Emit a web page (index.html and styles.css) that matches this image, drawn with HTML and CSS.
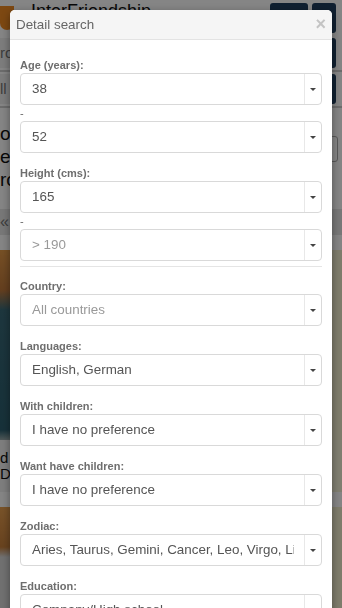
FILE: index.html
```html
<!DOCTYPE html>
<html lang="en">
<head>
<meta charset="utf-8">
<title>Detail search</title>
<link rel="stylesheet" href="styles.css">
</head>
<body>
<div class="page">
  <header class="topbar">
    <span class="logo"></span>
    <span class="brand">InterFriendship</span>
    <span class="spacer"></span>
    <span class="nav-btn wide"></span>
    <span class="nav-btn"></span>
  </header>
  <div class="search-row">
    <div class="input">rom</div>
    <span class="nav-btn"></span>
  </div>
  <div class="search-row">
    <div class="input">ll</div>
    <span class="nav-btn"></span>
  </div>
  <div class="intro">
    <p>o find new friends</p>
    <p>e. People from all</p>
    <p>rcountries</p>
    <span class="mini-btn"></span>
  </div>
  <div class="pager">«</div>
  <div class="card">
    <div class="photo"></div>
    <div class="card-text"><p>d</p><p>D</p></div>
  </div>
  <div class="card">
    <div class="photo second"></div>
  </div>
</div>
<div class="backdrop"></div>

<div class="modal">
  <div class="modal-header">
    <h4 class="modal-title">Detail search</h4>
    <span class="close">×</span>
  </div>
  <div class="modal-body">
    <div class="field">
      <label>Age (years):</label>
      <div class="select"><span class="value">38</span><span class="toggle"><i class="caret"></i></span></div>
      <div class="dash">-</div>
      <div class="select"><span class="value">52</span><span class="toggle"><i class="caret"></i></span></div>
    </div>
    <div class="field tight">
      <label>Height (cms):</label>
      <div class="select"><span class="value">165</span><span class="toggle"><i class="caret"></i></span></div>
      <div class="dash">-</div>
      <div class="select"><span class="value placeholder">&gt; 190</span><span class="toggle"><i class="caret"></i></span></div>
    </div>
    <hr class="divider">
    <div class="field">
      <label>Country:</label>
      <div class="select"><span class="value placeholder">All countries</span><span class="toggle"><i class="caret"></i></span></div>
    </div>
    <div class="field">
      <label>Languages:</label>
      <div class="select"><span class="value">English, German</span><span class="toggle"><i class="caret"></i></span></div>
    </div>
    <div class="field">
      <label>With children:</label>
      <div class="select"><span class="value">I have no preference</span><span class="toggle"><i class="caret"></i></span></div>
    </div>
    <div class="field">
      <label>Want have children:</label>
      <div class="select"><span class="value">I have no preference</span><span class="toggle"><i class="caret"></i></span></div>
    </div>
    <div class="field">
      <label>Zodiac:</label>
      <div class="select"><span class="value">Aries, Taurus, Gemini, Cancer, Leo, Virgo, Libra, Scorpio</span><span class="toggle"><i class="caret"></i></span></div>
    </div>
    <div class="field">
      <label>Education:</label>
      <div class="select"><span class="value">Company/High school</span><span class="toggle"><i class="caret"></i></span></div>
    </div>
  </div>
</div>
</body>
</html>
```
FILE: styles.css
```css
html, body {
  margin: 0;
  padding: 0;
  width: 342px;
  height: 608px;
  overflow: hidden;
}
body {
  position: relative;
  font-family: "Liberation Sans", Arial, sans-serif;
  background: #f6f3d8;
}

/* background page */
.page {
  display: flex;
  flex-direction: column;
  width: 342px;
  background: #fff;
}
.topbar {
  display: flex;
  align-items: center;
  height: 36px;
  gap: 4px;
  padding-right: 6px;
  background: #fff;
}
.logo {
  width: 14px;
  height: 24px;
  background: #f08a24;
  border-radius: 0 0 8px 8px;
}
.brand {
  margin-left: 13px;
  font-size: 18px;
  color: #111;
  align-self: flex-start;
  margin-top: 1px;
}
.spacer { flex: 1; }
.nav-btn {
  width: 24px;
  height: 30px;
  background: #1f3f5f;
  border-radius: 3px;
}
.nav-btn.wide { width: 38px; }
.search-row {
  display: flex;
  align-items: center;
  gap: 4px;
  height: 34px;
  padding-right: 6px;
  border-bottom: 2px solid #d0d0d0;
}
.search-row .input {
  flex: 1;
  height: 30px;
  background: #f0f0f0;
  color: #777;
  font-size: 15px;
  line-height: 30px;
}
.intro {
  position: relative;
  padding: 14px 0 10px;
  font-size: 19px;
  color: #111;
}
.intro p { margin: 0; line-height: 23px; }
.mini-btn {
  position: absolute;
  right: 4px;
  top: 28px;
  width: 10px;
  height: 24px;
  border: 1px solid #aaa;
  border-radius: 3px;
}
.pager {
  margin-top: 8px;
  height: 26px;
  background: #e6e6e6;
  color: #777;
  font-size: 16px;
  line-height: 26px;
}
.card {
  margin-top: 15px;
  background: #f6f3d8;
}
.photo {
  height: 190px;
  background:
    linear-gradient(to right, transparent 0 30px, #f3efd0 30px),
    linear-gradient(to bottom, #e49a48 0, #c0793c 40px, #3a6a78 60px, #2c5f6f 180px, #9aa 190px);
}
.photo.second {
  height: 110px;
  background:
    linear-gradient(to right, transparent 0 30px, #f3efd0 30px),
    linear-gradient(to bottom, #e8a050 0, #c8803c 40px, #d8d8d8 50px);
}
.card-text {
  padding: 10px 0;
  background: linear-gradient(to right, #f2f2f2 0 30px, #f6f3d8 30px);
  font-size: 15px;
  color: #111;
}
.card-text p { margin: 0; line-height: 16px; }

.backdrop {
  position: fixed;
  inset: 0;
  background: rgba(0, 0, 0, 0.48);
}

/* modal */
.modal {
  position: absolute;
  top: 10px;
  left: 10px;
  width: 322px;
  height: 620px;
  background: #fff;
  border-radius: 5px 5px 0 0;
  box-shadow: 0 3px 9px rgba(0, 0, 0, 0.4);
  overflow: hidden;
}
.modal-header {
  display: flex;
  align-items: center;
  justify-content: space-between;
  height: 29px;
  padding: 0 6px;
  background: #f5f5f5;
  border-bottom: 1px solid #e3e3e3;
}
.modal-title {
  margin: 0;
  font-size: 13.4px;
  font-weight: normal;
  color: #666;
}
.close {
  font-size: 18px;
  font-weight: bold;
  color: #c4c4c4;
  line-height: 18px;
  margin-top: -2px;
}
.modal-body {
  padding: 18px 10px 0;
}
.field {
  margin-bottom: 13px;
}
.field.tight {
  margin-bottom: 5px;
}
.field label {
  display: block;
  font-size: 11px;
  font-weight: bold;
  color: #6e6e6e;
  line-height: 15px;
}
.select {
  display: flex;
  height: 32px;
  box-sizing: border-box;
  border: 1px solid #d9d9d9;
  border-radius: 4px;
}
.value {
  flex: 1;
  min-width: 0;
  margin: 0 10px 0 11px;
  font-size: 13.4px;
  line-height: 30px;
  color: #555;
  white-space: nowrap;
  overflow: hidden;
}
.value.placeholder {
  color: #999;
}
.toggle {
  width: 16px;
  display: flex;
  align-items: center;
  justify-content: center;
  border-left: 1px solid #e8e8e8;
}
.caret {
  width: 0;
  height: 0;
  border-top: 3px solid #444;
  border-left: 3px solid transparent;
  border-right: 3px solid transparent;
}
.dash {
  font-size: 11px;
  line-height: 16px;
  color: #666;
}
.divider {
  border: 0;
  border-top: 1px solid #e5e5e5;
  margin: 0 0 12px;
}
```
